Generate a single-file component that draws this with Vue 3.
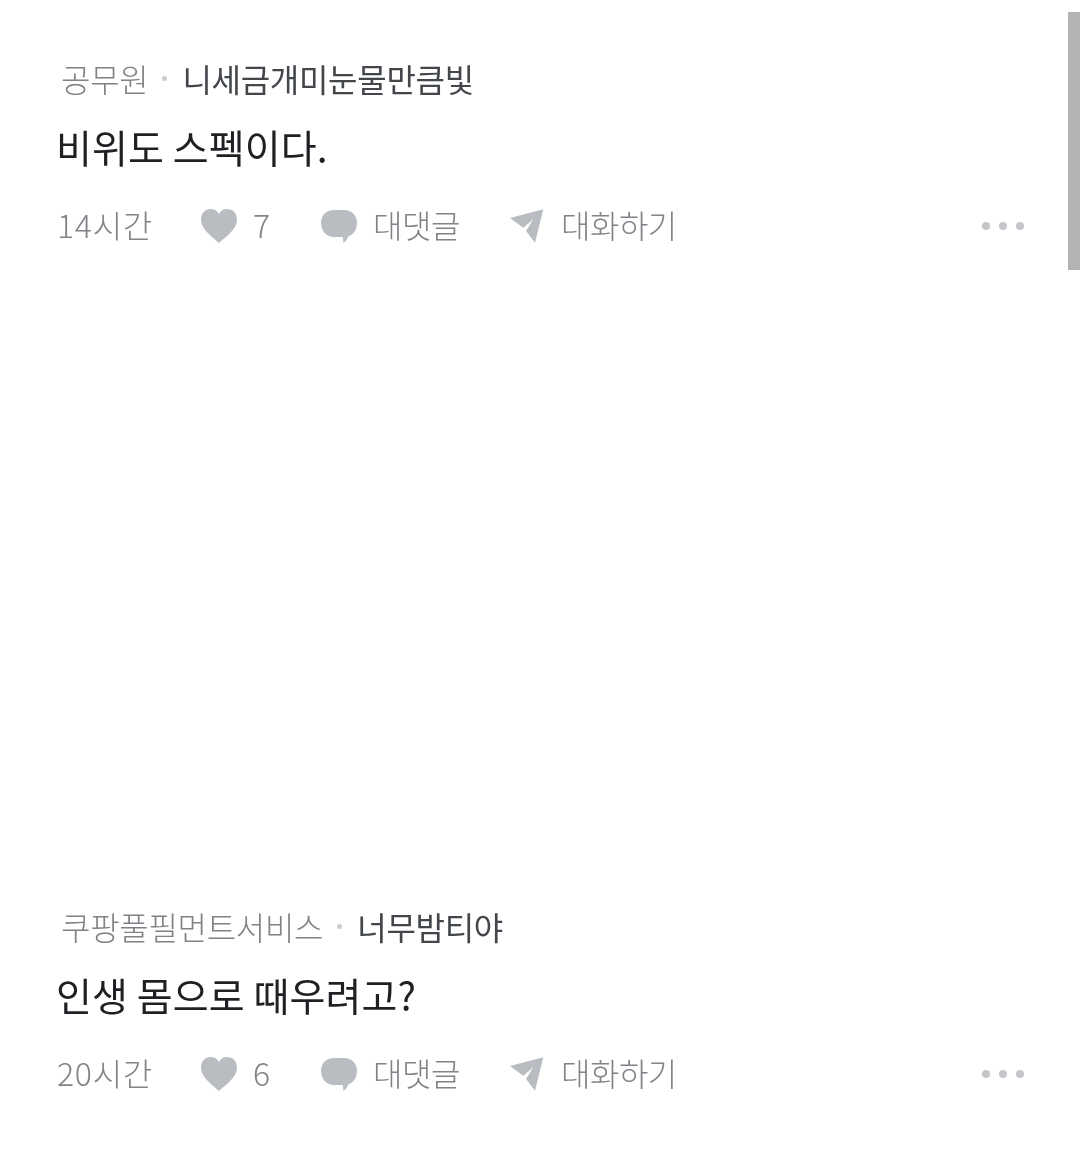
<script setup>
const comments = [
  { id: 1, school: '공무원', name: '니세금개미눈물만큼빛', body: '비위도 스펙이다.', time: '14시간', likes: 7 },
  { id: 2, school: '쿠팡풀필먼트서비스', name: '너무밤티야', body: '인생 몸으로 때우려고?', time: '20시간', likes: 6 }
]
</script>

<template>
  <div class="page">
    <div class="scrollbar"></div>
    <article v-for="c in comments" :key="c.id" class="comment">
      <div class="author">
        <span class="school">{{ c.school }}</span>
        <span class="dot"></span>
        <span class="name">{{ c.name }}</span>
      </div>
      <p class="body">{{ c.body }}</p>
      <div class="meta">
        <span class="time label">{{ c.time }}</span>
        <span class="action like">
          <svg width="38" height="36" viewBox="0 0 38 36"><path d="M19 35C14 30 1 22 1 11.500C1 5 5.500 1 11 1C14.500 1 17.200 2.800 19 6C20.800 2.800 23.500 1 27 1C32.500 1 37 5 37 11.500C37 22 24 30 19 35Z" fill="#b9bcc0"/></svg>
          <span class="label">{{ c.likes }}</span>
        </span>
        <span class="action reply">
          <svg width="38" height="36" viewBox="0 0 38 36"><path d="M14 2H24C32 2 37 7.500 37 15C37 22 33 27 28 28.500C27.500 31 26 33.500 23 35C23.500 33 23.200 30.500 22.500 29H14C6 29 1 22.500 1 15C1 7.500 6 2 14 2Z" fill="#b9bcc0"/></svg>
          <span class="label">대댓글</span>
        </span>
        <span class="action talk">
          <svg width="36" height="36" viewBox="0 0 36 36"><path d="M35.300 1.300L2 10L15.300 19.700L25.300 11.300L18 23L27 34.700Z" fill="#b9bcc0"/></svg>
          <span class="label">대화하기</span>
        </span>
        <span class="more"><i></i><i></i><i></i></span>
      </div>
    </article>
  </div>
</template>

<style>
html, body { background: #fff; }
</style>

<style scoped>
.page {
  position: relative;
  width: 1080px;
  height: 1168px;
  background: #fff;
  padding-top: 56px;
  box-sizing: border-box;
  font-family: "Noto Sans CJK KR", "Noto Sans", sans-serif;
  overflow: hidden;
}
.scrollbar {
  position: absolute;
  top: 12px;
  right: 0;
  width: 12px;
  height: 258px;
  background: #b3b3b3;
}
.comment {
  height: 848px;
  padding: 0 56px 0 56px;
  box-sizing: border-box;
  filter: blur(0.4px);
}
.author {
  display: flex;
  align-items: center;
  height: 44px;
  padding-left: 5px;
  font-size: 32px;
  font-weight: 300;
  letter-spacing: -0.3px;
}
.school { color: #7f8286; }
.dot {
  width: 5px;
  height: 5px;
  border-radius: 50%;
  background: #c9cbce;
  margin: 0 15px 0 14px;
}
.name { color: #43474c; font-weight: 400; }
.body {
  margin: 20px 0 0;
  height: 52px;
  line-height: 52px;
  font-size: 39px;
  font-weight: 400;
  color: #1e2024;
  letter-spacing: 0.1px;
}
.meta {
  display: flex;
  align-items: center;
  height: 44px;
  margin-top: 32px;
  padding-left: 1px;
  font-size: 32px;
  font-weight: 300;
  color: #808388;
  letter-spacing: -0.5px;
}
.label { padding-bottom: 4px; }
.time { width: 143px; letter-spacing: 0.7px; }
.action { display: flex; align-items: center; }
.like { width: 120px; gap: 15px; }
.reply { width: 188px; gap: 15px; }
.talk { gap: 17px; }
.more {
  margin-left: auto;
  display: flex;
  gap: 9px;
}
.more i {
  width: 8px;
  height: 8px;
  border-radius: 50%;
  background: #c4c6c9;
}
</style>
